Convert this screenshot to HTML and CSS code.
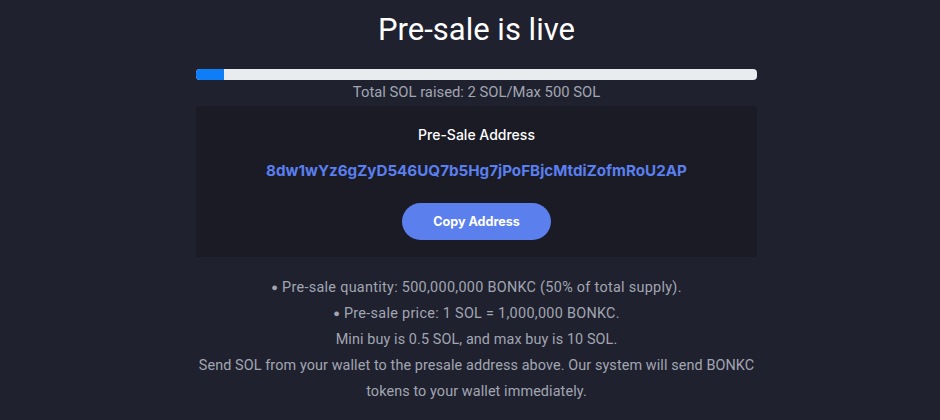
FILE: index.html
```html
<!DOCTYPE html>
<html lang="en">

<head>
    <meta charset="UTF-8">
    <meta name="viewport" content="width=device-width, initial-scale=1.0">
    <title>Pre-sale</title>
    <link rel="stylesheet" href="styles.css">
</head>

<body>
    <div class="container">
        <h1>Pre-sale is live</h1>

        <!-- Progress -->
        <div class="progress">
            <div class="progress-bar" style="width: 5%"></div>
        </div>
        <p class="raised">Total SOL raised: 2 SOL/Max 500 SOL</p>

        <!-- Address Card -->
        <div class="card">
            <h2>Pre-Sale Address</h2>
            <p class="address">8dw1wYz6gZyD546UQ7b5Hg7jPoFBjcMtdiZofmRoU2AP</p>
            <button type="button">Copy Address</button>
        </div>

        <!-- Info -->
        <div class="info">
            <p class="bullet"><span class="dot">●</span> Pre-sale quantity: 500,000,000 BONKC (50% of total supply).</p>
            <p class="bullet"><span class="dot">●</span> Pre-sale price: 1 SOL = 1,000,000 BONKC.</p>
            <p>Mini buy is 0.5 SOL, and max buy is 10 SOL.</p>
            <p>Send SOL from your wallet to the presale address above. Our system will send BONKC tokens to your wallet immediately.</p>
        </div>
    </div>
</body>

</html>
```

FILE: styles.css
```css
body {
    font-family: Roboto, "Liberation Sans", sans-serif;
    margin: 0;
    background: #1f212e;
    color: #a2a6b2;
}

.container {
    width: 561px;
    margin: 0 auto;
    padding-left: 13px;
    text-align: center;
}

h1 {
    margin: 0;
    padding-top: 10px;
    height: 59px;
    line-height: 40px;
    font-size: 31px;
    font-weight: 400;
    color: #ffffff;
}

.progress {
    height: 11px;
    background: #e9ecef;
    border-radius: 4px;
    overflow: hidden;
}

.progress-bar {
    height: 100%;
    background: #0d7ef8;
}

.raised {
    margin: 3px 0 4px;
    font-size: 14.8px;
    line-height: 19px;
}

.card {
    background: #1a1b24;
    border-radius: 3px;
    padding: 18px 0 17px;
}

.card h2 {
    margin: 0;
    font-family: Inter, "Liberation Sans", sans-serif;
    font-size: 14px;
    font-weight: 500;
    line-height: 22px;
    color: #ffffff;
}

.address {
    margin: 15px 0 22px;
    font-family: Inter, "Liberation Sans", sans-serif;
    font-size: 15.2px;
    font-weight: 700;
    line-height: 20px;
    color: #5a7ff0;
}

button {
    width: 149px;
    height: 37px;
    background-color: #5b7fec;
    color: white;
    border: none;
    border-radius: 19px;
    font-family: Inter, "Liberation Sans", sans-serif;
    font-size: 12.6px;
    font-weight: 700;
    cursor: pointer;
}

.info {
    margin: 18px -10px 0;
}

.info p {
    margin: 0;
    font-size: 14.4px;
    line-height: 26px;
    letter-spacing: 0.1px;
}

.info .bullet {
    letter-spacing: 0.3px;
}

.dot {
    font-size: 11px;
    vertical-align: 1px;
}
```
